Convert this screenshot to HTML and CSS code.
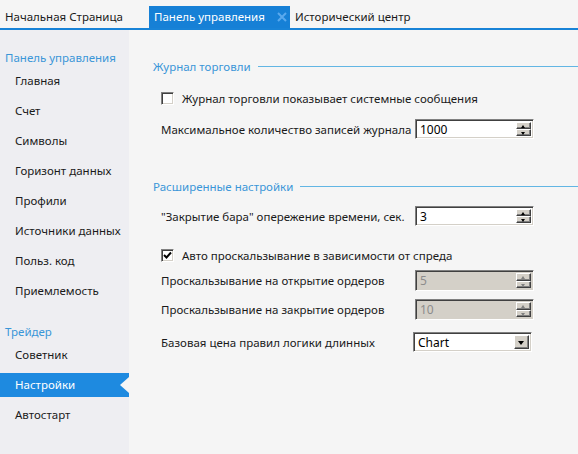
FILE: index.html
```html
<!DOCTYPE html>
<html lang="ru">
<head>
<meta charset="utf-8">
<title>Панель управления</title>
<link rel="stylesheet" href="styles.css">
</head>
<body>
<div class="tabs">
  <div class="tab first">Начальная Страница</div>
  <div class="tab active">Панель управления
    <svg class="close" width="10" height="10" viewBox="0 0 10 10"><path d="M1 1L9 9M9 1L1 9" stroke="#5aa9ee" stroke-width="2"/></svg>
  </div>
  <div class="tab">Исторический центр</div>
</div>
<div class="main">
  <nav class="side">
    <div class="group">Панель управления</div>
    <div class="item">Главная</div>
    <div class="item">Счет</div>
    <div class="item">Символы</div>
    <div class="item">Горизонт данных</div>
    <div class="item">Профили</div>
    <div class="item">Источники данных</div>
    <div class="item">Польз. код</div>
    <div class="item">Приемлемость</div>
    <div class="group g2">Трейдер</div>
    <div class="item">Советник</div>
    <div class="item selected">Настройки</div>
    <div class="item">Автостарт</div>
  </nav>
  <section class="content">
    <div class="sec-head h1"><span>Журнал торговли</span><i class="line"></i></div>
    <div class="row r-check1"><span class="cb"></span><span>Журнал торговли показывает системные сообщения</span></div>
    <div class="row r-spin1"><span class="lbl">Максимальное количество записей журнала</span>
      <div class="spin"><span class="val">1000</span><span class="btns"><b class="btn up"></b><b class="btn dn"></b></span></div>
    </div>

    <div class="sec-head h2"><span>Расширенные настройки</span><i class="line"></i></div>
    <div class="row r-spin2"><span class="lbl">"Закрытие бара" опережение времени, сек.</span>
      <div class="spin"><span class="val">3</span><span class="btns"><b class="btn up"></b><b class="btn dn"></b></span></div>
    </div>
    <div class="row r-check2"><span class="cb checked"><svg width="9" height="9" viewBox="0 0 9 9"><path d="M1 4L3.5 6.5L8 1.5" fill="none" stroke="#000" stroke-width="2"/></svg></span><span>Авто проскальзывание в зависимости от спреда</span></div>
    <div class="row r-spin3"><span class="lbl">Проскальзывание на открытие ордеров</span>
      <div class="spin disabled"><span class="val">5</span><span class="btns"><b class="btn up"></b><b class="btn dn"></b></span></div>
    </div>
    <div class="row r-spin4"><span class="lbl">Проскальзывание на закрытие ордеров</span>
      <div class="spin disabled"><span class="val">10</span><span class="btns"><b class="btn up"></b><b class="btn dn"></b></span></div>
    </div>
    <div class="row r-select"><span class="lbl">Базовая цена правил логики длинных</span>
      <div class="select"><span class="val">Chart</span><span class="dd"></span></div>
    </div>
  </section>
</div>
</body>
</html>
```

FILE: styles.css
```css
* { box-sizing: border-box; }
html, body { margin: 0; padding: 0; }
body {
  width: 578px;
  height: 454px;
  overflow: hidden;
  background: #f5f5f5;
  font-family: "Noto Sans", "Open Sans", sans-serif;
  font-size: 11.5px;
  color: #1a1a1a;
}

/* Tabs */
.tabs {
  height: 30px;
  display: flex;
  align-items: flex-end;
  border-bottom: 2px solid #1883d7;
  background: #f5f5f5;
}
.tab {
  height: 22px;
  line-height: 22px;
  padding-left: 5px;
  white-space: nowrap;
}
.tab.first { width: 149px; }
.tab.active {
  width: 141px;
  background: #1680d6;
  color: #fff;
  position: relative;
}
.close { position: absolute; left: 128px; top: 6px; }

/* Layout */
.main { display: flex; height: 424px; }
.side {
  width: 129px;
  background: #eeeef2;
  display: flex;
  flex-direction: column;
}
.group {
  height: 16px;
  line-height: 16px;
  padding-left: 5px;
  color: #3a96d8;
  margin-top: 20px;
  margin-bottom: 3px;
}
.group.g2 { margin-top: 15px; }
.item {
  height: 24px;
  line-height: 24px;
  padding-left: 15px;
  margin-bottom: 6px;
  position: relative;
}
.item.selected {
  background: #1e8ae0;
  color: #fff;
}
.item.selected::after {
  content: "";
  position: absolute;
  right: 0;
  top: 4px;
  border-style: solid;
  border-width: 8px 9px 8px 0;
  border-color: transparent #f5f5f5 transparent transparent;
}

/* Content */
.content {
  flex: 1;
  padding-left: 24px;
  display: flex;
  flex-direction: column;
}
.sec-head {
  height: 16px;
  display: flex;
  align-items: center;
  color: #3a96d8;
}
.sec-head .line {
  flex: 1;
  height: 1px;
  background: #62b6e4;
  margin-left: 7px;
}
.h1 { margin-top: 28px; }
.h2 { margin-top: 39px; }

.row {
  display: flex;
  align-items: center;
  height: 20px;
  padding-left: 8px;
}
.r-check1 { margin-top: 14px; }
.r-spin1 { margin-top: 11px; }
.r-spin2 { margin-top: 12px; }
.r-check2 { margin-top: 19px; }
.r-spin3 { margin-top: 5px; height: 21px; }
.r-spin4 { margin-top: 8px; height: 21px; }
.r-select { margin-top: 12px; }

.lbl { width: 254px; flex: none; white-space: nowrap; }

.cb {
  width: 13px;
  height: 13px;
  margin-right: 8px;
  background: #fff;
  border-top: 1px solid #808080;
  border-left: 1px solid #808080;
  border-bottom: 1px solid #fff;
  border-right: 1px solid #fff;
  box-shadow: inset 1px 1px 0 #404040, inset -1px -1px 0 #d4d0c8;
  display: flex;
  align-items: center;
  justify-content: center;
}

.spin, .select {
  width: 119px;
  height: 100%;
  background: #fff;
  border-top: 1px solid #808080;
  border-left: 1px solid #808080;
  border-bottom: 1px solid #fff;
  border-right: 1px solid #fff;
  box-shadow: inset 1px 1px 0 #404040, inset -1px -1px 0 #d4d0c8;
  display: flex;
  align-items: stretch;
  padding: 2px;
}
.select { margin-left: -2px; }
.val {
  flex: 1;
  line-height: 16px;
  padding-left: 2px;
  color: #000;
  font-size: 12px;
}
.spin.disabled { background: #d4d0c8; }
.spin.disabled .val { color: #8c8c8c; }
.btns {
  width: 15px;
  display: flex;
  flex-direction: column;
}
.btn {
  flex: 1;
  background: #d4d0c8;
  border-top: 1px solid #fff;
  border-left: 1px solid #fff;
  border-right: 1px solid #404040;
  border-bottom: 1px solid #404040;
  box-shadow: inset -1px -1px 0 #808080;
  position: relative;
}
.btn::after {
  content: "";
  position: absolute;
  left: 4px;
  top: 2px;
  border-style: solid;
  border-color: transparent;
}
.btn.up::after { border-width: 0 2.5px 3px 2.5px; border-bottom-color: #000; }
.btn.dn::after { border-width: 3px 2.5px 0 2.5px; border-top-color: #000; top: 2px; }
.disabled .btn.up::after { border-bottom-color: #808080; }
.disabled .btn.dn::after { border-top-color: #808080; }

.dd {
  width: 15px;
  background: #d4d0c8;
  border-top: 1px solid #fff;
  border-left: 1px solid #fff;
  border-right: 1px solid #404040;
  border-bottom: 1px solid #404040;
  box-shadow: inset -1px -1px 0 #808080;
  position: relative;
}
.dd::after {
  content: "";
  position: absolute;
  left: 3px;
  top: 5px;
  border-style: solid;
  border-width: 4px 3.5px 0 3.5px;
  border-color: #000 transparent transparent transparent;
}
```
